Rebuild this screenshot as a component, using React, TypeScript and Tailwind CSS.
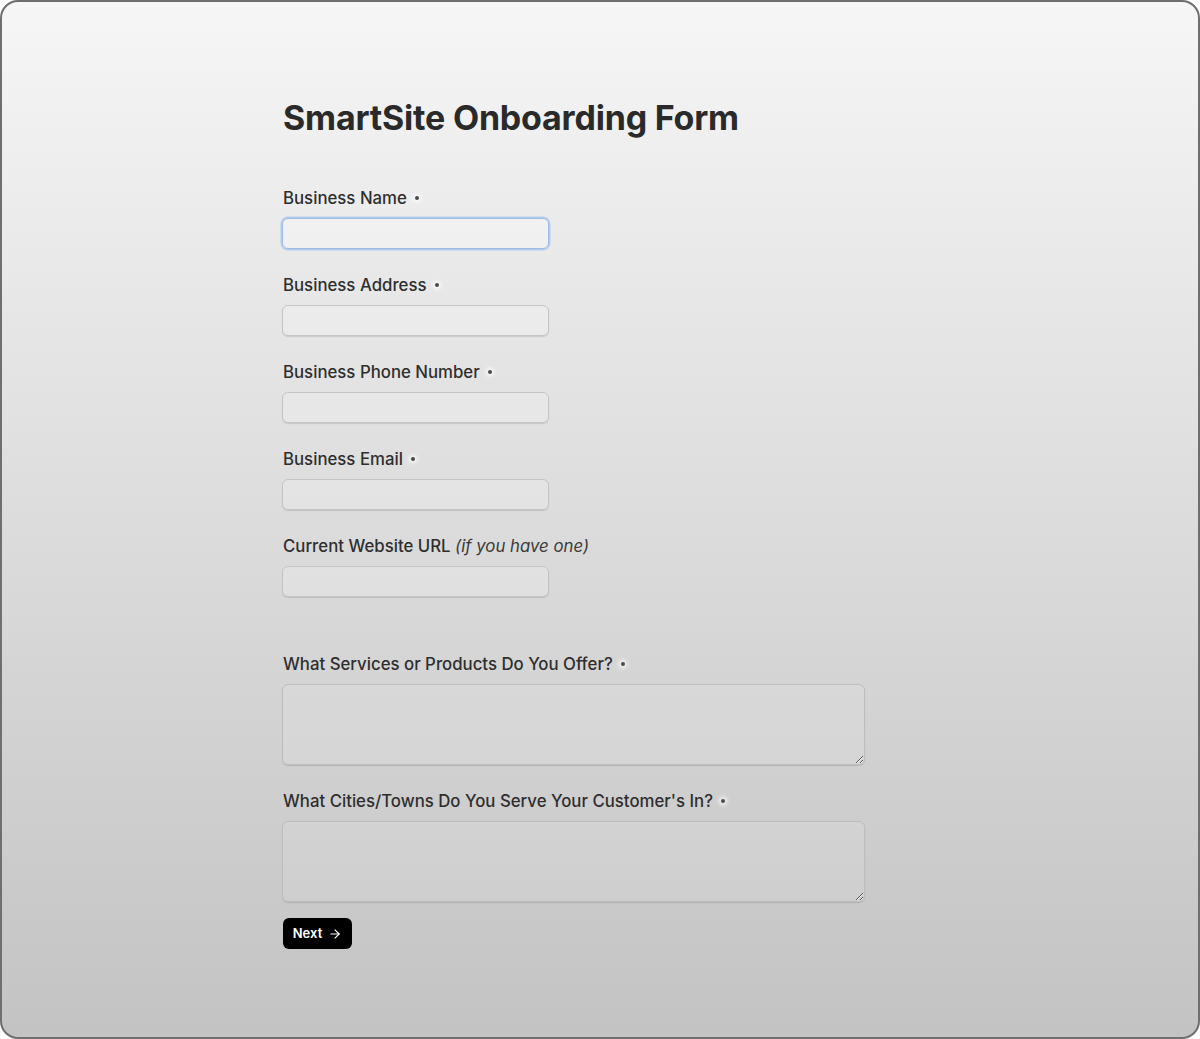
import { ArrowRight } from "lucide-react";

const Req = () => (
  <span className="relative -top-[1px] ml-[8px] inline-block h-[4px] w-[4px] rounded-full bg-[#4a4a4a] align-middle shadow-[0_0_4px_2px_rgba(255,255,255,0.8)]" />
);

function Label({ children, required = true }: { children: React.ReactNode; required?: boolean }) {
  return (
    <label className="block pl-[1px] text-[16.8px] font-medium leading-6 text-[#2e2e2e]">
      {children}
      {required && <Req />}
    </label>
  );
}

function TextInput({ focused = false }: { focused?: boolean }) {
  return (
    <input
      type="text"
      className={
        focused
          ? "mt-[8px] block h-[31px] w-[267px] rounded-[6px] border border-[#9dbbe5] bg-white/30 px-3 text-sm shadow-[0_0_0_1.5px_#b3cbeb] outline-none"
          : "mt-[8px] block h-[31px] w-[267px] rounded-[6px] border border-[#c4c4c4] bg-white/20 px-3 text-sm shadow-[0_1px_1px_rgba(0,0,0,0.12)] outline-none"
      }
    />
  );
}

function TextArea() {
  return (
    <textarea className="mt-[8px] block h-[81px] w-[583px] rounded-[6px] border border-[#bdbdbd] bg-white/10 px-3 py-2 text-sm shadow-[0_1px_1px_rgba(0,0,0,0.12)] outline-none" />
  );
}

export default function App() {
  return (
    <div className="min-h-screen bg-white font-['Inter',sans-serif]">
      <div className="h-[1039px] w-full rounded-[18px] border-2 border-[#6f6f6f] bg-gradient-to-b from-[#f6f6f6] to-[#c3c3c3]">
        <div className="pl-[280px] pt-[94px]">
          <h1 className="pl-[1px] text-[34px] font-bold leading-[44px] tracking-[-0.2px] text-[#2a2a2a]">
            SmartSite Onboarding Form
          </h1>

          <div className="mt-[46px] flex flex-col gap-[24px]">
            <div>
              <Label>Business Name</Label>
              <TextInput focused />
            </div>
            <div>
              <Label>Business Address</Label>
              <TextInput />
            </div>
            <div>
              <Label>Business Phone Number</Label>
              <TextInput />
            </div>
            <div>
              <Label>Business Email</Label>
              <TextInput />
            </div>
            <div>
              <Label required={false}>
                Current Website URL <span className="font-normal italic text-[#3a3a3a]">(if you have one)</span>
              </Label>
              <TextInput />
            </div>
            <div className="mt-[31px]">
              <Label>What Services or Products Do You Offer?</Label>
              <TextArea />
            </div>
            <div>
              <Label>What Cities/Towns Do You Serve Your Customer's In?</Label>
              <TextArea />
            </div>
          </div>

          <button
            type="button"
            className="ml-[1px] mt-[16px] flex h-[31px] w-[69px] items-center justify-center gap-[6px] rounded-[6px] bg-black text-[13px] font-semibold text-white"
          >
            Next
            <ArrowRight className="h-[14px] w-[14px]" strokeWidth={2} />
          </button>
        </div>
      </div>
    </div>
  );
}
